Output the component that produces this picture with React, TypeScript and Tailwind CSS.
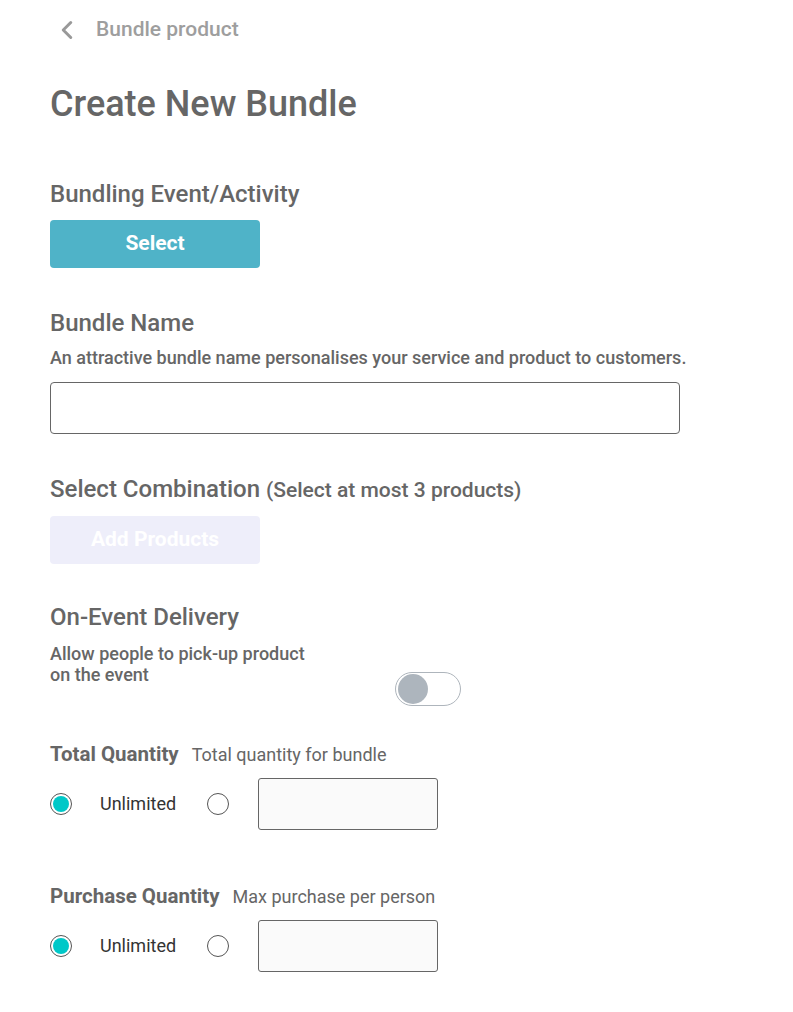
import { ChevronLeft } from "lucide-react"

function Radio({ checked }: { checked?: boolean }) {
  return (
    <span className="w-[22px] h-[22px] rounded-full border border-[#555] flex items-center justify-center shrink-0 bg-white">
      {checked && <span className="w-[16px] h-[16px] rounded-full bg-[#00c8c8]" />}
    </span>
  )
}

function QuantityRow() {
  return (
    <div className="flex items-center mt-[10px]">
      <Radio checked />
      <span className="ml-[28px] text-[18px] text-[#333] leading-[22px]">Unlimited</span>
      <span className="ml-[31px]">
        <Radio />
      </span>
      <input
        type="text"
        className="ml-[29px] w-[180px] h-[52px] bg-[#fafafa] border border-[#666] rounded-[3px] outline-none"
      />
    </div>
  )
}

export default function App() {
  return (
    <main className="min-h-screen bg-white font-['Roboto',sans-serif] pl-[50px]">
      <div className="h-[60px] flex items-center">
        <ChevronLeft className="w-[30px] h-[30px] text-[#999] ml-[2px]" strokeWidth={2.4} />
        <span className="ml-[14px] text-[21px] font-medium text-[#9e9e9e]">Bundle product</span>
      </div>

      <h1 className="mt-[24px] text-[36px] leading-[40px] font-medium text-[#666]">Create New Bundle</h1>

      <h2 className="mt-[56px] text-[24px] leading-[28px] font-medium text-[#666]">Bundling Event/Activity</h2>
      <button className="mt-[12px] w-[210px] h-[48px] rounded-[4px] bg-[#4fb3c8] text-white text-[21px] font-bold">
        Select
      </button>

      <h2 className="mt-[41px] text-[24px] leading-[28px] font-medium text-[#666]">Bundle Name</h2>
      <p className="mt-[10px] text-[18px] leading-[22px] font-medium text-[#666]">
        An attractive bundle name personalises your service and product to customers.
      </p>
      <input
        type="text"
        className="block mt-[13px] w-[630px] h-[52px] border border-[#666] rounded-[4px] outline-none"
      />

      <h2 className="mt-[41px] text-[24px] leading-[28px] font-medium text-[#666]">
        Select Combination <span className="text-[21px]">(Select at most 3 products)</span>
      </h2>
      <button className="mt-[12px] w-[210px] h-[48px] rounded-[4px] bg-[#eeeefa] text-white text-[21px] font-bold">
        Add Products
      </button>

      <h2 className="mt-[39px] text-[24px] leading-[28px] font-medium text-[#666]">On-Event Delivery</h2>
      <div className="mt-[12px] flex items-start">
        <p className="w-[345px] text-[18px] leading-[21px] font-medium text-[#666]">
          Allow people to pick-up product
          <br />
          on the event
        </p>
        <div className="mt-[29px] w-[66px] h-[34px] rounded-full border border-[#aeb5bc] flex items-center pl-[2px]">
          <span className="w-[30px] h-[30px] rounded-full bg-[#adb5bd]" />
        </div>
      </div>

      <div className="mt-[35px] flex items-baseline">
        <span className="text-[20.5px] leading-[24px] font-bold text-[#666]">Total Quantity</span>
        <span className="ml-[13px] text-[18px] text-[#666]">Total quantity for bundle</span>
      </div>
      <QuantityRow />

      <div className="mt-[53px] flex items-baseline">
        <span className="text-[20.5px] leading-[24px] font-bold text-[#666]">Purchase Quantity</span>
        <span className="ml-[13px] text-[18px] text-[#666]">Max purchase per person</span>
      </div>
      <QuantityRow />
    </main>
  )
}
